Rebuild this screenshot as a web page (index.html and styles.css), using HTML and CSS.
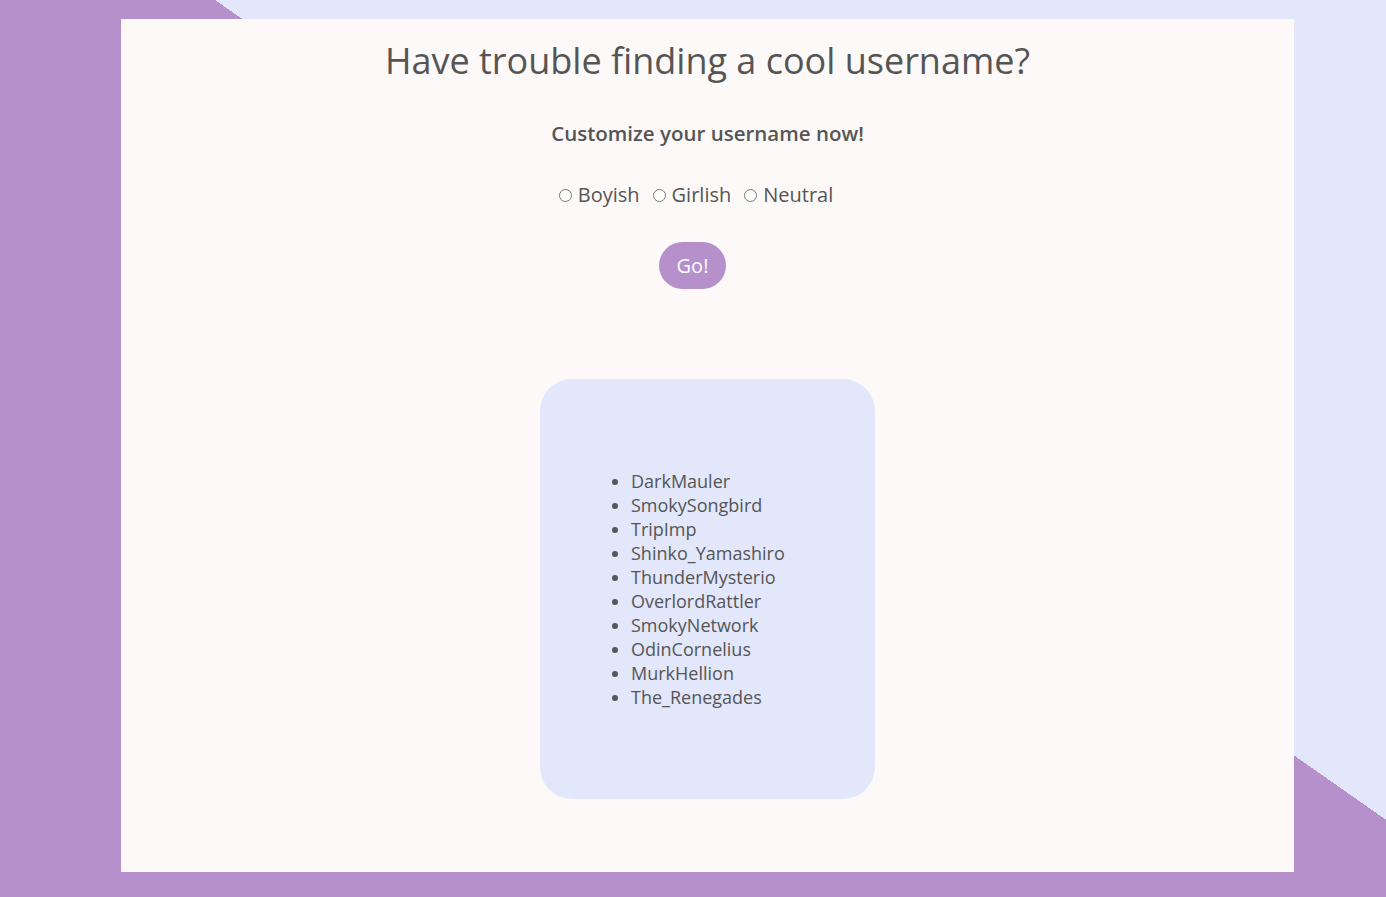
FILE: index.html
```html
<!DOCTYPE html>
<html lang="en">
<head>
<meta charset="utf-8">
<title>Username Generator</title>
<link rel="stylesheet" href="styles.css">
</head>
<body>
<main class="panel">
  <h1 class="title">Have trouble finding a cool username?</h1>
  <h2 class="subtitle">Customize your username now!</h2>
  <form class="options">
    <label class="option"><input type="radio" name="style" value="boyish"><span>Boyish</span></label>
    <label class="option"><input type="radio" name="style" value="girlish"><span>Girlish</span></label>
    <label class="option"><input type="radio" name="style" value="neutral"><span>Neutral</span></label>
  </form>
  <button class="go" type="button">Go!</button>
  <section class="results">
    <ul class="names">
      <li>DarkMauler</li>
      <li>SmokySongbird</li>
      <li>TripImp</li>
      <li>Shinko_Yamashiro</li>
      <li>ThunderMysterio</li>
      <li>OverlordRattler</li>
      <li>SmokyNetwork</li>
      <li>OdinCornelius</li>
      <li>MurkHellion</li>
      <li>The_Renegades</li>
    </ul>
  </section>
</main>
</body>
</html>
```

FILE: styles.css
```css
html {
  height: 100%;
  background: linear-gradient(35deg, #b590ca 0, #b590ca 56.1%, #e2e7fc 56.1%, #e2e7fc 100%);
}

body {
  margin: 0;
  padding: 19px 92px 25px 121px;
  font-family: "Open Sans", "Noto Sans", sans-serif;
  color: #555555;
}

.panel {
  background: #fdf9f8;
  display: flex;
  flex-direction: column;
  align-items: center;
  padding: 17px 0 73px;
}

.title {
  margin: 0;
  font-size: 36px;
  font-weight: 400;
  line-height: 49px;
  letter-spacing: 0;
}

.subtitle {
  margin: 35px 0 0;
  font-size: 20.5px;
  font-weight: 600;
  line-height: 27px;
  letter-spacing: 0;
}

.options {
  margin: 34px 23px 0 0;
  display: flex;
  gap: 13px;
  font-size: 20px;
  line-height: 27px;
}

.option {
  display: flex;
  align-items: center;
}

.option input {
  margin: 1px 6px 0 0;
  width: 13px;
  height: 13px;
}

.go {
  margin: 34px 30px 0 0;
  height: 47px;
  padding: 0 18px;
  border: none;
  border-radius: 24px;
  background: #b590ca;
  color: #ffffff;
  font-family: "Open Sans", "Noto Sans", sans-serif;
  font-size: 20px;
}

.results {
  margin-top: 90px;
  width: 335px;
  box-sizing: border-box;
  padding: 90px 40px 90px 51px;
  background: #e2e7fc;
  border-radius: 32px;
}

.names {
  margin: 0;
  padding-left: 40px;
  font-size: 18px;
  line-height: 24px;
}
```
